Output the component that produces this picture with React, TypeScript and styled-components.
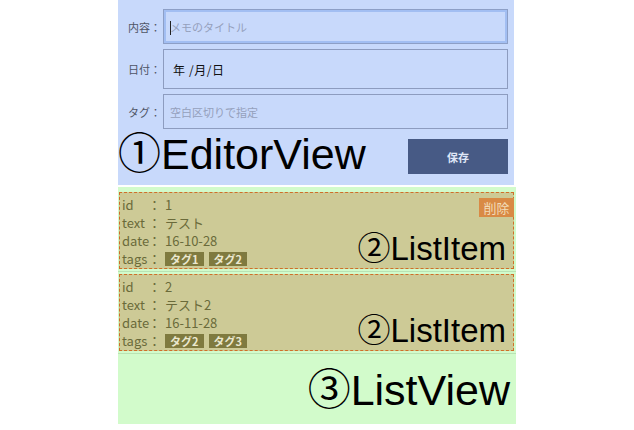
import React from 'react';
import styled, { createGlobalStyle } from 'styled-components';

const GlobalStyle = createGlobalStyle`
  body {
    margin: 0;
    background: #ffffff;
    font-family: "Noto Sans CJK JP", "Noto Sans", sans-serif;
  }
`;

type Memo = { id: number; text: string; date: string; tags: string[] };

const memos: Memo[] = [
  { id: 1, text: 'テスト', date: '16-10-28', tags: ['タグ1', 'タグ2'] },
  { id: 2, text: 'テスト2', date: '16-11-28', tags: ['タグ2', 'タグ3'] },
];

const App = (): JSX.Element => {
  return (
    <Page>
      <GlobalStyle />
      <Editor>
        <Form>
          <Label>内容：</Label>
          <Field className="focused">
            <Caret />
            <Input placeholder="メモのタイトル" />
          </Field>
          <Label>日付：</Label>
          <Field className="date">
            <Input readOnly value="年 /月/日" />
          </Field>
          <Label>タグ：</Label>
          <Field>
            <Input placeholder="空白区切りで指定" />
          </Field>
        </Form>
        <EditorFooter>
          <BigTitle>①EditorView</BigTitle>
          <SaveButton type="button">保存</SaveButton>
        </EditorFooter>
      </Editor>
      <ListView>
        {memos.map((memo, i) => (
          <ItemWrap key={memo.id}>
            <Item>
              {i === 0 && <DeleteButton type="button">削除</DeleteButton>}
              <Row>
                <Key>id</Key>
                <Colon>：</Colon>
                <span>{memo.id}</span>
              </Row>
              <Row>
                <Key>text</Key>
                <Colon>：</Colon>
                <span>{memo.text}</span>
              </Row>
              <Row>
                <Key>date</Key>
                <Colon>：</Colon>
                <span>{memo.date}</span>
              </Row>
              <Row>
                <Key>tags</Key>
                <Colon>：</Colon>
                <Tags>
                  {memo.tags.map((t) => (
                    <Tag key={t}>{t}</Tag>
                  ))}
                </Tags>
              </Row>
              <ItemTitle>②ListItem</ItemTitle>
            </Item>
          </ItemWrap>
        ))}
        <ListTitle>③ListView</ListTitle>
      </ListView>
    </Page>
  );
};

const Page = styled.div`
  width: 398px;
  margin: 0 auto;
`;

const Editor = styled.section`
  width: 396px;
  background: #c8d9fb;
  padding: 9px 6px 0 0;
  box-sizing: border-box;
`;

const Form = styled.div`
  display: grid;
  grid-template-columns: 45px 1fr;
  row-gap: 5px;
  align-items: center;
`;

const Label = styled.label`
  font-size: 11px;
  color: #4f5566;
  text-align: right;
  padding-right: 2px;
`;

const Field = styled.div`
  position: relative;
  height: 35px;
  border: 1px solid #8d9cbf;
  box-sizing: border-box;
  display: flex;
  align-items: center;
  &.focused {
    border: 1px solid #8d9fc6;
    box-shadow: inset 0 0 0 2px #a2bef2;
  }
  &.date {
    height: 40px;
  }
  &.date input {
    color: #111;
    padding-left: 9px;
    font-size: 12px;
    letter-spacing: 0.6px;
  }
`;

const Caret = styled.span`
  position: absolute;
  left: 6px;
  top: 11px;
  width: 1px;
  height: 14px;
  background: #222;
`;

const Input = styled.input`
  width: 100%;
  border: none;
  background: transparent;
  outline: none;
  font-family: "Noto Sans CJK JP", sans-serif;
  font-size: 11px;
  padding: 0 0 0 6px;
  color: #333;
  &::placeholder {
    color: #95a0bb;
  }
`;

const EditorFooter = styled.div`
  display: flex;
  justify-content: space-between;
  align-items: flex-start;
  height: 56px;
  padding-left: 0;
  box-sizing: border-box;
`;

const BigTitle = styled.div`
  font-family: "Liberation Sans", "Noto Sans CJK JP", sans-serif;
  font-size: 43px;
  line-height: 1;
  color: #000;
  margin-top: 4px;
`;

const SaveButton = styled.button`
  width: 100px;
  height: 35px;
  border: none;
  background: #475a85;
  color: #dfe6f7;
  font-family: "Noto Sans CJK JP", sans-serif;
  font-size: 11px;
  font-weight: bold;
  margin-top: 10px;
`;

const ListView = styled.section`
  margin-top: 2px;
  background: #d2fbcb;
  height: 237px;
`;

const ItemWrap = styled.div`
  border-bottom: 1px solid #b9e3b3;
  padding: 2px 2px 2px 1px;
  &:first-child {
    padding-top: 5px;
  }
`;

const Item = styled.div`
  position: relative;
  background: #cdca96;
  border: 1px dashed #cf6f28;
  padding: 3px 2px 0 2px;
  color: #6a6a3a;
  font-size: 13px;
  line-height: 18px;
`;

const Row = styled.div`
  display: flex;
  align-items: center;
  height: 18px;
`;

const Key = styled.span`
  width: 26px;
`;

const Colon = styled.span`
  width: 17px;
`;

const Tags = styled.span`
  display: flex;
  gap: 5px;
`;

const Tag = styled.span`
  background: #7f7a3f;
  color: #ebe8cf;
  font-size: 11px;
  font-weight: bold;
  line-height: 14px;
  padding: 0 5px;
`;

const DeleteButton = styled.button`
  position: absolute;
  top: 5px;
  right: -1px;
  width: 35px;
  height: 19px;
  border: none;
  padding: 0;
  background: #d98a45;
  color: #f2dcb8;
  font-family: "Noto Sans CJK JP", sans-serif;
  font-size: 13px;
`;

const ItemTitle = styled.div`
  position: absolute;
  right: 7px;
  bottom: 3px;
  font-family: "Liberation Sans", "Noto Sans CJK JP", sans-serif;
  font-size: 33px;
  line-height: 1;
  color: #000;
`;

const ListTitle = styled.div`
  text-align: right;
  font-family: "Liberation Sans", "Noto Sans CJK JP", sans-serif;
  font-size: 43px;
  line-height: 1;
  color: #000;
  padding: 15px 6px 0 0;
`;

export default App;
